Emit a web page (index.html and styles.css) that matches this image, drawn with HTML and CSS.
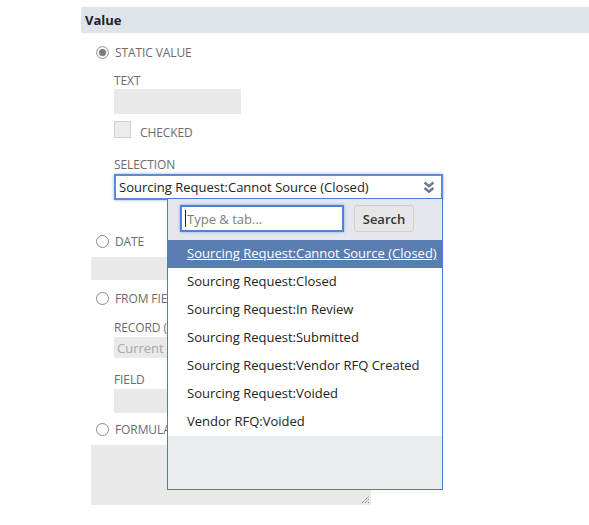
FILE: index.html
```html
<!DOCTYPE html>
<html>
<head>
<meta charset="utf-8">
<link rel="stylesheet" href="styles.css">
</head>
<body>
<div class="panel">
  <div class="header">Value</div>
  <div class="content">
    <div class="radio-row r-static"><span class="radio checked"></span><span class="lbl">Static Value</span></div>
    <div class="sub">
      <div class="flabel l-text">Text</div>
      <div class="input w-text"></div>
      <div class="check-row"><span class="checkbox"></span><span class="lbl">Checked</span></div>
      <div class="flabel l-sel">Selection</div>
      <div class="select-wrap">
        <div class="select">
          <span class="sel-text">Sourcing Request:Cannot Source (Closed)</span>
          <svg class="chev" width="12" height="13" viewBox="0 0 12 13"><path d="M1.5 1.5 L6 5.2 L10.5 1.5" fill="none" stroke="#6b7a8c" stroke-width="2.5"/><path d="M1.5 7 L6 10.7 L10.5 7" fill="none" stroke="#6b7a8c" stroke-width="2.5"/></svg>
        </div>
        <div class="dropdown">
          <div class="dd-search">
            <div class="dd-input"><span class="caret"></span><span class="ph">Type &amp; tab...</span></div>
            <div class="dd-btn">Search</div>
          </div>
          <div class="dd-list">
            <div class="dd-item active">Sourcing Request:Cannot Source (Closed)</div>
            <div class="dd-item">Sourcing Request:Closed</div>
            <div class="dd-item">Sourcing Request:In Review</div>
            <div class="dd-item">Sourcing Request:Submitted</div>
            <div class="dd-item">Sourcing Request:Vendor RFQ Created</div>
            <div class="dd-item">Sourcing Request:Voided</div>
            <div class="dd-item">Vendor RFQ:Voided</div>
          </div>
          <div class="dd-foot"></div>
        </div>
      </div>
    </div>
    <div class="radio-row r-date"><span class="radio"></span><span class="lbl">Date</span></div>
    <div class="input w-date"></div>
    <div class="radio-row r-from"><span class="radio"></span><span class="lbl">From Field</span></div>
    <div class="sub">
      <div class="flabel l-rec">Record (Optional)</div>
      <div class="input w-rec"><span class="ph2">Current</span></div>
      <div class="flabel l-field">Field</div>
      <div class="input w-field"></div>
    </div>
    <div class="radio-row r-formula"><span class="radio"></span><span class="lbl">Formula</span></div>
    <div class="textarea">
      <svg class="grip" width="9" height="9" viewBox="0 0 9 9"><path d="M1 8 L8 1 M4 8 L8 4 M7 8 L8 7" stroke="#555" stroke-width="1" stroke-dasharray="1 1"/></svg>
    </div>
  </div>
</div>
</body>
</html>
```

FILE: styles.css
```css
* { box-sizing: border-box; }
body {
  margin: 0;
  background: #fff;
  font-family: "Open Sans", "DejaVu Sans", sans-serif;
  color: #222;
}
.panel {
  margin-left: 81px;
  padding-top: 7px;
  width: 508px;
}
.header {
  height: 26px;
  line-height: 26px;
  background: #dfe3ea;
  padding-left: 4px;
  font-size: 13px;
  font-weight: bold;
  color: #222;
}
.content {
  padding-left: 10px;
}
.radio-row {
  display: flex;
  align-items: center;
  height: 18px;
  padding-left: 5px;
}
.radio {
  width: 13px;
  height: 13px;
  border: 1px solid #8a8a8a;
  border-radius: 50%;
  background: #fff;
  position: relative;
  flex: none;
}
.radio.checked {
  border-color: #9a9a9a;
  background: #f2f2f2;
}
.radio.checked::after {
  content: "";
  position: absolute;
  left: 2px;
  top: 2px;
  width: 7px;
  height: 7px;
  border-radius: 50%;
  background: #7a7a7a;
}
.lbl {
  margin-left: 6px;
  font-size: 12px;
  text-transform: uppercase;
  color: #6b6b6b;
  letter-spacing: -0.1px;
}
.r-static { margin-top: 10px; }
.sub { padding-left: 23px; }
.flabel {
  font-size: 12px;
  text-transform: uppercase;
  color: #6b6b6b;
  letter-spacing: -0.1px;
  height: 16px;
  line-height: 16px;
}
.l-text { margin-top: 12px; }
.input {
  background: #e9e9e9;
}
.w-text { width: 127px; height: 25px; }
.check-row {
  display: flex;
  align-items: center;
  margin-top: 7px;
  height: 17px;
}
.checkbox {
  width: 17px;
  height: 17px;
  border: 1px solid #cfcfcf;
  background: #ececec;
  flex: none;
}
.check-row .lbl { margin-left: 9px; padding-top: 6px; }
.l-sel { margin-top: 19px; }
.select-wrap {
  position: relative;
  margin-top: 1px;
  width: 329px;
}
.select {
  height: 26px;
  border: 2px solid #5b8ad8;
  box-shadow: 0 0 3px rgba(70, 120, 220, 0.6);
  background: #fff;
  display: flex;
  align-items: center;
  padding-left: 3px;
  padding-right: 6px;
}
.sel-text {
  font-size: 13px;
  color: #222;
  flex: 1;
}
.chev { flex: none; }
.dropdown {
  position: absolute;
  left: 53px;
  top: 24px;
  width: 276px;
  height: 292px;
  border: 1px solid #4a7ad6;
  background: #e9edf0;
  z-index: 5;
  display: flex;
  flex-direction: column;
}
.dd-search {
  height: 41px;
  background: #e4e8ee;
  display: flex;
  align-items: flex-start;
  padding: 6px 0 0 12px;
  gap: 10px;
}
.dd-input {
  width: 164px;
  height: 27px;
  border: 2px solid #4d82d8;
  box-shadow: 0 0 3px rgba(70, 120, 220, 0.6);
  background: #fff;
  display: flex;
  align-items: center;
  padding-left: 3px;
}
.caret {
  width: 1px;
  height: 17px;
  background: #222;
}
.ph {
  font-size: 13px;
  color: #808080;
  margin-left: 1px;
}
.dd-btn {
  width: 60px;
  height: 27px;
  border: 1px solid #cfcfcf;
  border-radius: 3px;
  background: #e6e6e6;
  font-size: 13px;
  font-weight: 600;
  color: #333;
  display: flex;
  align-items: center;
  justify-content: center;
}
.dd-list {
  background: #fff;
}
.dd-item {
  height: 28px;
  line-height: 27px;
  padding-left: 19px;
  font-size: 13px;
  color: #222;
  white-space: nowrap;
}
.dd-item.active {
  background: #5a7db0;
  color: #fff;
  text-decoration: underline;
}
.dd-foot { flex: 1; }
.r-date { margin-top: 32px; }
.w-date { width: 300px; height: 23px; margin-top: 7px; }
.r-from { margin-top: 9px; }
.l-rec { margin-top: 13px; }
.w-rec { width: 200px; height: 21px; margin-top: 1px; display: flex; align-items: center; padding-left: 3px; }
.ph2 { font-size: 13px; color: #a8a8a8; }
.l-field { margin-top: 14px; }
.w-field { width: 200px; height: 24px; margin-top: 1px; }
.r-formula { margin-top: 7px; }
.textarea {
  margin-top: 7px;
  width: 280px;
  height: 60px;
  background: #e9e9e9;
  position: relative;
}
.grip {
  position: absolute;
  right: 1px;
  bottom: 1px;
}
```
